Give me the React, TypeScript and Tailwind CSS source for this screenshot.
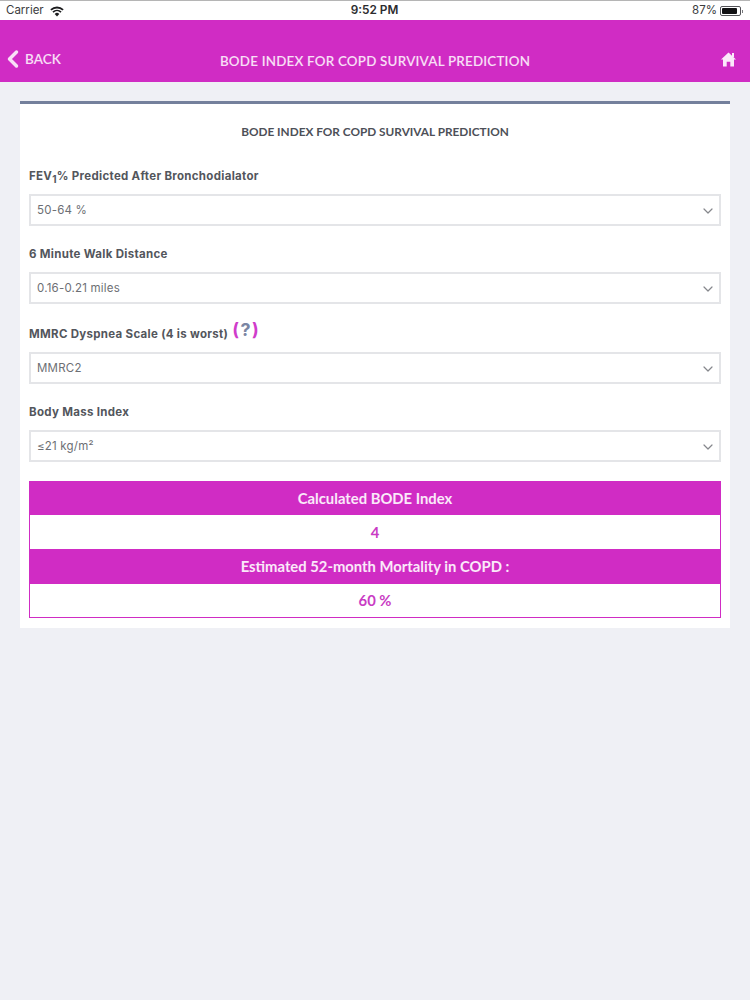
import { ChevronDown, ChevronLeft } from "lucide-react";

const fields = [
  { id: "fev", value: "50-64 %" },
  { id: "walk", label: "6 Minute Walk Distance", value: "0.16-0.21 miles" },
  { id: "mmrc", value: "MMRC2" },
  { id: "bmi", label: "Body Mass Index", value: "≤21 kg/m²" },
];

function FieldLabel({ id, label }: { id: string; label?: string }) {
  if (id === "fev") {
    return (
      <span className="text-[11.5px] font-bold tracking-[0.3px] text-[#53565c]">
        FEV<span className="relative top-[3px] text-[10px]">1</span>% Predicted After Bronchodialator
      </span>
    );
  }
  if (id === "mmrc") {
    return (
      <span className="flex items-end text-[11.5px] font-bold tracking-[0.3px] text-[#53565c]">
        MMRC Dyspnea Scale (4 is worst)
        <span className="relative top-[-4px] ml-[4px] text-[18px] leading-[20px] tracking-[1.5px]">
          <span className="text-[#d03ccb]">(</span>
          <span className="text-[#7b86a3]">?</span>
          <span className="text-[#d03ccb]">)</span>
        </span>
      </span>
    );
  }
  return <span className="text-[11.5px] font-bold tracking-[0.3px] text-[#53565c]">{label}</span>;
}

function SelectField({ id, label, value }: { id: string; label?: string; value: string }) {
  return (
    <div>
      <div className={id === "mmrc" ? "mb-[8px] flex h-[21px] items-center" : "mb-[7px] flex h-[20px] items-center"}>
        <FieldLabel id={id} label={label} />
      </div>
      <div className="flex h-[32px] items-center justify-between border-2 border-[#e4e5e8] bg-white pl-[6px] pr-[3px] pt-[2px] text-[11.5px] tracking-[0.2px] text-[#6d6f74]">
        <span>{value}</span>
        <ChevronDown size={16} strokeWidth={1.8} className="text-[#85878c]" />
      </div>
    </div>
  );
}

export default function App() {
  return (
    <div className="flex min-h-[1000px] flex-col bg-[#eff0f5] font-['Inter',sans-serif]">
      <div className="flex h-[20px] items-center justify-between border-t border-[#b5b5b5] bg-white pl-[6px] pr-[7px] pt-[1px] text-[11.5px] text-[#3c3c3e]">
        <div className="flex flex-1 items-center gap-[6px]">
          <span>Carrier</span>
          <svg width="14" height="11" viewBox="0 0 14 11" fill="#1c1c1e">
            <path d="M7 10.5 L4.7 7.9 A3.4 3.4 0 0 1 9.3 7.9 Z" />
            <path d="M3.5 6.7 L2.4 5.5 A6.8 6.8 0 0 1 11.6 5.5 L10.5 6.7 A5.2 5.2 0 0 0 3.5 6.7 Z" />
            <path d="M1.5 4.5 L0.3 3.2 A10 10 0 0 1 13.7 3.2 L12.5 4.5 A8.4 8.4 0 0 0 1.5 4.5 Z" />
          </svg>
        </div>
        <span className="text-[11.8px] font-semibold text-[#2c2c2e]">9:52 PM</span>
        <div className="flex flex-1 items-center justify-end gap-[3px]">
          <span>87%</span>
          <div className="h-[10px] w-[21px] rounded-[2px] border border-[#55555a] p-[1px]">
            <div className="h-full w-[87%] rounded-[1px] bg-[#111113]" />
          </div>
          <div className="-ml-[2px] h-[3px] w-[1px] bg-[#77777b]" />
        </div>
      </div>

      <div className="flex h-[62px] items-end justify-between bg-[#d02cc4] pb-[11px] pl-[7px] pr-[14px] font-['Lato',sans-serif] text-white/85">
        <div className="flex w-[120px] items-center">
          <ChevronLeft size={28} strokeWidth={3} className="-my-[2px] -ml-[8px] text-white/85" />
          <span className="-ml-[2px] text-[13.5px] font-semibold">BACK</span>
        </div>
        <span className="text-[13.4px] font-semibold tracking-[0.2px]">BODE INDEX FOR COPD SURVIVAL PREDICTION</span>
        <div className="flex w-[113px] justify-end pb-[4px]">
          <svg width="15" height="15" viewBox="0 0 15 15" fill="#fbe9fa">
            <path d="M7.5 0.5 L15 7.4 L13 7.4 L13 14.5 L9.3 14.5 L9.3 9.8 L5.7 9.8 L5.7 14.5 L2 14.5 L2 7.4 L0 7.4 Z" />
            <rect x="11" y="1" width="2" height="4" />
          </svg>
        </div>
      </div>

      <div className="px-[20px] pt-[19px]">
        <div className="border-t-[3px] border-[#74809c] bg-white px-[9px] pb-[10px]">
          <h1 className="pt-[20px] text-center font-['Lato',sans-serif] text-[11.8px] font-bold leading-[16px] text-[#4d5058]">
            BODE INDEX FOR COPD SURVIVAL PREDICTION
          </h1>
          <div className="mt-[27px] flex flex-col gap-[19px]">
            {fields.map((f) => (
              <SelectField key={f.id} id={f.id} label={f.label} value={f.value} />
            ))}
          </div>
          <div className="mt-[19px] border-b border-[#d02cc4] font-['Lato',sans-serif] text-[14.8px] font-bold">
            <div className="flex h-[34px] items-center justify-center bg-[#d02cc4] text-white/90">Calculated BODE Index</div>
            <div className="flex h-[34px] items-center justify-center border-x border-[#d02cc4] bg-white text-[#c93cc4]">4</div>
            <div className="flex h-[35px] items-center justify-center bg-[#d02cc4] text-white/90">Estimated 52-month Mortality in COPD :</div>
            <div className="flex h-[33px] items-center justify-center border-x border-[#d02cc4] bg-white text-[#c93cc4]">60 %</div>
          </div>
        </div>
      </div>
    </div>
  );
}
